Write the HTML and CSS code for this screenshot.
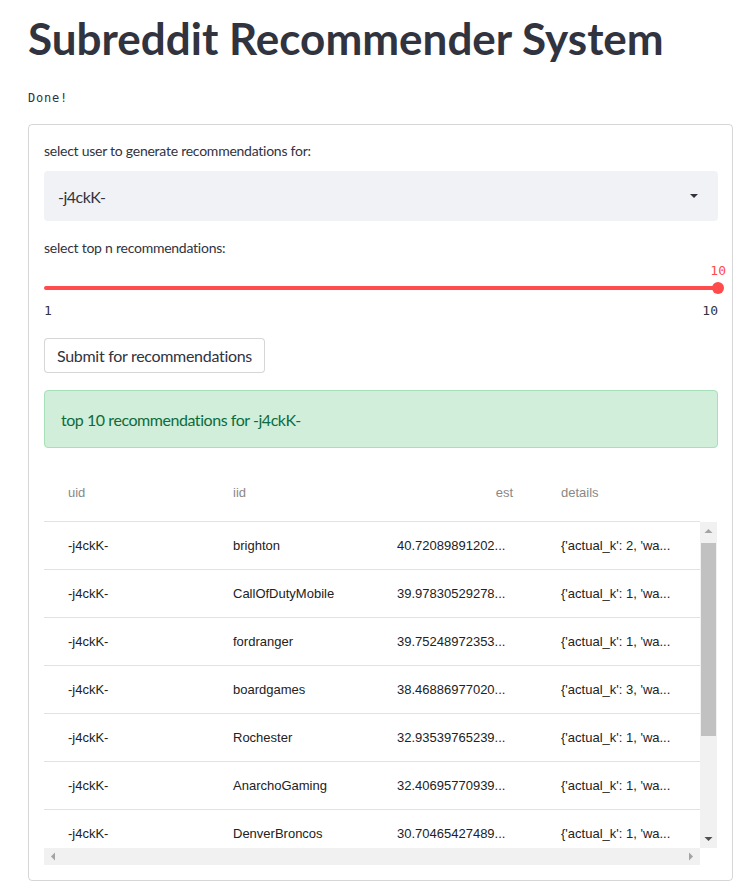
FILE: index.html
```html
<!DOCTYPE html>
<html>
<head>
<meta charset="utf-8">
<link rel="stylesheet" href="styles.css">
</head>
<body>
<div class="main">
  <h1 class="title">Subreddit Recommender System</h1>
  <div class="status">Done!</div>
  <div class="form">
    <div class="label">select user to generate recommendations for:</div>
    <div class="select">
      <span>-j4ckK-</span>
      <svg class="caret" width="10" height="6" viewBox="0 0 10 6"><path d="M1 1h8L5 5z" fill="#31333f"/></svg>
    </div>
    <div class="label label2">select top n recommendations:</div>
    <div class="slider">
      <div class="slider-value"><span>10</span></div>
      <div class="slider-track"><div class="track"></div><div class="thumb"></div></div>
      <div class="slider-ticks"><span>1</span><span>10</span></div>
    </div>
    <div class="btn-row"><button class="btn">Submit for recommendations</button></div>
    <div class="success">top 10 recommendations for -j4ckK-</div>
    <div class="table">
      <div class="thead">
        <div class="c c1">uid</div><div class="c c2">iid</div><div class="c c3 right">est</div><div class="c c4">details</div>
      </div>
      <div class="tbody-wrap">
        <div class="tbody">
          <div class="row"><div class="c c1">-j4ckK-</div><div class="c c2">brighton</div><div class="c c3">40.72089891202...</div><div class="c c4">{'actual_k': 2, 'wa...</div></div>
          <div class="row"><div class="c c1">-j4ckK-</div><div class="c c2">CallOfDutyMobile</div><div class="c c3">39.97830529278...</div><div class="c c4">{'actual_k': 1, 'wa...</div></div>
          <div class="row"><div class="c c1">-j4ckK-</div><div class="c c2">fordranger</div><div class="c c3">39.75248972353...</div><div class="c c4">{'actual_k': 1, 'wa...</div></div>
          <div class="row"><div class="c c1">-j4ckK-</div><div class="c c2">boardgames</div><div class="c c3">38.46886977020...</div><div class="c c4">{'actual_k': 3, 'wa...</div></div>
          <div class="row"><div class="c c1">-j4ckK-</div><div class="c c2">Rochester</div><div class="c c3">32.93539765239...</div><div class="c c4">{'actual_k': 1, 'wa...</div></div>
          <div class="row"><div class="c c1">-j4ckK-</div><div class="c c2">AnarchoGaming</div><div class="c c3">32.40695770939...</div><div class="c c4">{'actual_k': 1, 'wa...</div></div>
          <div class="row"><div class="c c1">-j4ckK-</div><div class="c c2">DenverBroncos</div><div class="c c3">30.70465427489...</div><div class="c c4">{'actual_k': 1, 'wa...</div></div>
        </div>
        <div class="vscroll">
          <svg class="arr" width="17" height="17" viewBox="0 0 17 17"><path d="M4.5 11h8L8.5 7z" fill="#a3a3a3"/></svg>
          <div class="vthumb"></div>
          <div class="vspace"></div>
          <svg class="arr" width="17" height="17" viewBox="0 0 17 17"><path d="M4.5 6h8L8.5 10z" fill="#505050"/></svg>
        </div>
      </div>
      <div class="hscroll-row">
        <div class="hscroll">
          <svg width="17" height="17" viewBox="0 0 17 17"><path d="M11 4.5v8L7 8.5z" fill="#a3a3a3"/></svg>
          <svg width="17" height="17" viewBox="0 0 17 17"><path d="M6 4.5v8L10 8.5z" fill="#a3a3a3"/></svg>
        </div>
        <div class="corner"></div>
      </div>
    </div>
  </div>
</div>
</body>
</html>
```

FILE: styles.css
```css
* { box-sizing: border-box; }
html, body { margin: 0; padding: 0; background: #fff; }
body { font-family: Lato, "Open Sans", sans-serif; color: #31333f; }
.main { width: 735px; padding: 12px 2px 0 28px; }
.title {
  margin: 0;
  font-size: 44px;
  line-height: 53px;
  font-weight: 700;
  color: #31333f;
  letter-spacing: 0;
}
.status {
  margin-top: 24px;
  height: 18px;
  line-height: 18px;
  font-family: "DejaVu Sans Mono", monospace;
  font-size: 12px;
  letter-spacing: 0.8px;
  color: #31333f;
}
.form {
  margin-top: 17px;
  border: 1px solid rgba(49, 51, 63, 0.2);
  border-radius: 4px;
  padding: 16px 14px 15px 15px;
  height: 757px;
}
.label {
  height: 20px;
  line-height: 20px;
  font-size: 14px;
  letter-spacing: -0.25px;
  color: #31333f;
}
.label2 { margin-top: 17px; }
.select {
  margin-top: 10px;
  height: 50px;
  background: #f0f2f6;
  border-radius: 4px;
  display: flex;
  align-items: center;
  justify-content: space-between;
  padding: 0 19px 0 14px;
  font-size: 16px;
  letter-spacing: -0.5px;
}
.slider { display: flex; flex-direction: column; }
.slider-value {
  margin-top: 4px;
  height: 18px;
  line-height: 18px;
  display: flex;
  justify-content: flex-end;
  font-family: "DejaVu Sans Mono", monospace;
  font-size: 13px;
  color: #ff4b4b;
  margin-right: -8px;
}
.slider-track {
  height: 16px;
  display: flex;
  align-items: center;
  position: relative;
}
.track { flex: 1; height: 4px; background: #ff4b4b; border-radius: 2px; }
.thumb {
  position: absolute;
  right: -6px;
  top: 2px;
  width: 12px;
  height: 12px;
  border-radius: 50%;
  background: #ff4b4b;
}
.slider-ticks {
  margin-top: 6px;
  height: 18px;
  line-height: 18px;
  display: flex;
  justify-content: space-between;
  font-family: "DejaVu Sans Mono", monospace;
  font-size: 13px;
  color: #31333f;
}
.btn-row { margin-top: 18px; display: flex; }
.btn {
  height: 35px;
  padding: 0 12px;
  background: #fff;
  border: 1px solid rgba(49, 51, 63, 0.2);
  border-radius: 4px;
  font-family: inherit;
  font-size: 16px;
  letter-spacing: -0.3px;
  color: #31333f;
}
.success {
  margin-top: 17px;
  height: 58px;
  background: #d0eed9;
  border: 1px solid #a6e0b8;
  border-radius: 4px;
  display: flex;
  align-items: center;
  padding: 0 16px;
  font-size: 16px;
  letter-spacing: -0.45px;
  color: #0f6b3b;
}
.table {
  margin-top: 15px;
  width: 673px;
  font-family: "Liberation Sans", Arial, sans-serif;
  font-size: 13px;
}
.thead {
  display: flex;
  height: 59px;
  border-bottom: 1px solid #e2e2e2;
  align-items: center;
  color: #888;
  width: 656px;
  padding-top: 1px;
}
.c { flex: none; width: 164px; padding: 0 24px; white-space: nowrap; overflow: hidden; }
.c1 { width: 165px; }
.c4 { width: 163px; }
.right { text-align: right; }
.tbody-wrap { display: flex; height: 326px; }
.tbody { width: 656px; flex: none; overflow: hidden; }
.row {
  display: flex;
  align-items: center;
  height: 48px;
  border-bottom: 1px solid #e2e2e2;
  color: #222;
}
.vscroll {
  flex: none;
  width: 17px;
  background: #f1f1f1;
  display: flex;
  flex-direction: column;
}
.arr { flex: none; }
.vthumb { flex: none; margin: 4px 1px 0 1px; height: 193px; background: #c1c1c1; }
.vspace { flex: 1; }
.hscroll-row { display: flex; height: 17px; }
.hscroll {
  flex: none;
  width: 656px;
  background: #f1f1f1;
  display: flex;
  justify-content: space-between;
}
.corner { width: 17px; }
```
